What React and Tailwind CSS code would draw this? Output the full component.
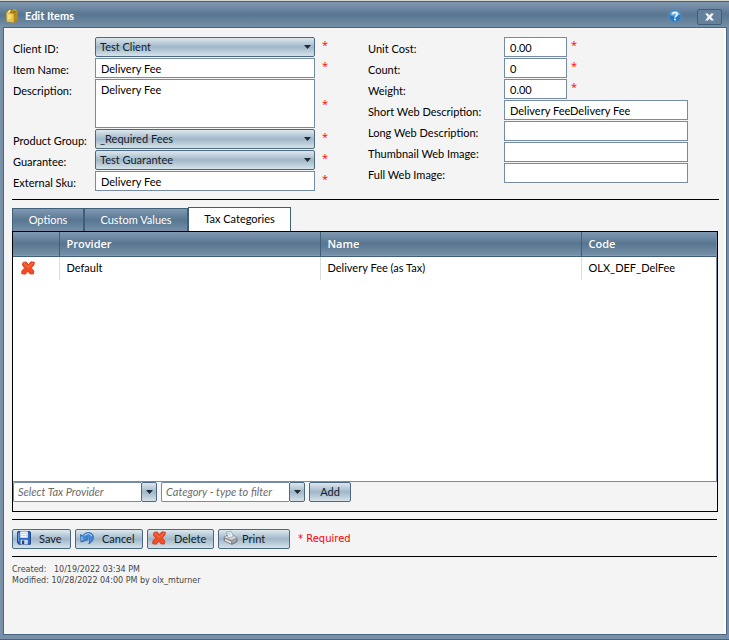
import React, { useState } from 'react';

const BAR = 'bg-linear-to-b from-[#8299b2] from-0% via-[#587691] via-50% to-[#7590a7] to-100%';
const BUTTON = 'bg-linear-to-b from-[#dde8ed] from-0% via-[#a0b7c9] via-50% to-[#d6e2e8] to-100% border border-[#4b6983] rounded-xs';
const FIELD = 'bg-white border border-[#768ca5] outline-none text-[11px] text-black';

// --- Icons ---
const BoxIcon = () => (
    <svg width="14" height="16" viewBox="0 0 14 16" aria-hidden="true">
        <path d="M1.2 4.5 4 1.6h6.5L12.8 4v8.6L9.8 14.6 1.6 14z" fill="#a67c12" />
        <path d="M1.3 5 8.8 5.4v9L1.8 13.8z" fill="#e6c245" />
        <path d="M8.8 5.4 12.6 4v8.4l-3 2z" fill="#b58b1c" />
        <path d="M1.6 4.7 4.2 2h2L4.8 5z" fill="#f4e08a" />
        <path d="M5 4.8 6.8 2H10L9 5z" fill="#8c6a14" />
        <path d="M2.4 6.2 6.5 6.5v4L2.6 12z" fill="#f5dc78" />
        <path d="M7 4.4C8.2.8 11 .6 11.3 4" fill="none" stroke="#caa437" strokeWidth="1.2" />
    </svg>
);

const HelpIcon = () => (
    <svg width="14" height="14" viewBox="0 0 14 14" aria-hidden="true">
        <circle cx="7" cy="7" r="6.3" fill="#2878c4" stroke="#5f8fb8" strokeWidth="1" />
        <path d="M1.7 6a5.4 5.4 0 0 1 10.6 0C9 5.5 5 8 1.7 6z" fill="#69ade5" />
        <path d="M4.8 5.2C5 3 9.2 3 9.2 5.3 9.2 6.8 7 6.8 7 8.6" fill="none" stroke="#fff" strokeWidth="1.6" />
        <circle cx="7" cy="10.6" r="1" fill="#fff" />
    </svg>
);

const CloseIcon = () => (
    <svg width="9" height="8" viewBox="0 0 9 8" aria-hidden="true">
        <path d="M0 .5h3l1.5 2 1.5-2h3L6.2 4 9 7.5H6l-1.5-2-1.5 2H0L2.8 4z" fill="#f3f5f7" />
    </svg>
);

const ArrowIcon = () => (
    <svg width="7" height="4" viewBox="0 0 7 4" aria-hidden="true">
        <path d="M0 0h7L3.5 4z" fill="#1c2a35" />
    </svg>
);

const CrossIcon = () => (
    <svg width="14" height="14" viewBox="0 0 14 14" aria-hidden="true">
        <path
            d="M2 1.4 5.2.9 7.3 3.6 9.8.8 13.5 1.2 12.8 4.3 10.2 6.7 13 10.2 12.3 13 9 12.9 6.8 10.2 4.4 13.2.7 12.8.9 9.8 3.6 7 1.4 4z"
            fill="#f14c26" stroke="#d23a1a" strokeWidth=".8" strokeLinejoin="round"
        />
        <path d="M3.2 2.4 7 6.4 11.8 2.2" fill="none" stroke="#ff7d52" strokeWidth="1" strokeLinecap="round" />
    </svg>
);

const SaveIcon = () => (
    <svg width="14" height="14" viewBox="0 0 14 14" aria-hidden="true">
        <path d="M.6 1.2.9.6h12l.5.6v12H2L.6 12z" fill="#2f68be" stroke="#1d4384" />
        <path d="M3.2.4h7.6v6.4H3.2z" fill="#eef4f9" />
        <path d="M4 2.5h6M4 4.5h6" stroke="#c3d3e2" strokeWidth=".8" />
        <path d="M3.6 8.8h7.2v4.6H3.6z" fill="#c9d6e3" />
        <path d="M5 9.6h2.2v3.4H5z" fill="#1d4384" />
        <path d="M1.6 2v8" stroke="#6f9fe0" />
    </svg>
);

const UndoIcon = () => (
    <svg width="14" height="14" viewBox="0 0 14 14" aria-hidden="true">
        <path
            d="M.6 3.6 2.6 5C5.4.2 12.8.4 13.4 5.6c.4 3.4-1.6 5.8-4.6 7.2C10.2 9.8 10 5.6 6.4 6.4L8.2 8.8 1 11z"
            fill="#4389d6" stroke="#225da8" strokeWidth=".8" strokeLinejoin="round"
        />
        <path d="M4.4 4.6C6.4 2 10.5 2 11.8 5M1.8 5.6l.2 3.8" fill="none" stroke="#a9d2f6" strokeWidth="1.1" />
    </svg>
);

const PrintIcon = () => (
    <svg width="15" height="14" viewBox="0 0 15 14" aria-hidden="true">
        <path d="M1 6.2 4 4.6 10 4l4 2.6v4.2L9 13.4 1.2 9.8z" fill="#8b8d90" stroke="#6a6d71" strokeWidth=".7" />
        <path d="M1.2 6.2 4 4.8 10 4.2l3.8 2.4L8.8 9z" fill="#d3d5d7" />
        <path d="M3 1.2 8.2.4 10.4 5.4 5.6 6.8z" fill="#f8fbfd" stroke="#8396a6" strokeWidth=".7" />
        <path d="m4.5 2.6 3-.5M5.2 4.2l3-.6" stroke="#95c2e5" strokeWidth=".8" />
        <path d="m2 8 6 2.8v1.6L2 9.6z" fill="#f1f2f3" />
        <path d="m9.4 10 3.8-2v2l-3.8 2z" fill="#a9abae" />
    </svg>
);

// --- Form pieces ---
const SelectField = ({ id, options }) => (
    <div className="relative flex h-5 w-[220px]">
        <select id={id} className={`${BUTTON} h-5 w-full appearance-none pr-5 pl-1 text-[11px] leading-4 text-[#10202c] outline-none`}>
            {options.map((option) => <option key={option}>{option}</option>)}
        </select>
        <span className="pointer-events-none absolute top-2 right-1"><ArrowIcon /></span>
    </div>
);

const FormRow = ({ id, label, type = 'text', value, options, required, labelWidth, size, markGap = 'pl-[7px]' }) => (
    <div className="flex">
        <label htmlFor={id} className={`${labelWidth} shrink-0 pt-1 text-[11px] leading-4 text-black`}>{label}</label>
        {type === 'select' && <SelectField id={id} options={options} />}
        {type === 'textarea' && <textarea id={id} defaultValue={value} className={`${FIELD} h-[49px] w-[220px] resize-none px-[5px] pt-[2px] leading-4`} />}
        {type === 'text' && <input id={id} type="text" defaultValue={value} className={`${FIELD} ${size} px-[5px] pt-px`} />}
        {required && (
            <span className={`${markGap} flex font-['Open_Sans',sans-serif] text-[11px] leading-4 text-[#ff0000] ${type === 'textarea' ? 'items-center' : ''}`}>*</span>
        )}
    </div>
);

const ComboBox = ({ id, placeholder }) => (
    <div className="flex h-5 w-36">
        <input id={id} aria-label={placeholder} placeholder={placeholder} className={`${FIELD} w-full min-w-0 rounded-l-xs border-r-0 px-1 italic placeholder:text-[#6b6b6b]`} />
        <button type="button" aria-label={`Open ${placeholder}`} className={`${BUTTON} flex w-4 shrink-0 items-center justify-center`}><ArrowIcon /></button>
    </div>
);

const ActionButton = ({ icon: Icon, label, width, gap = 'gap-2' }) => (
    <button type="button" className={`${BUTTON} ${width} ${gap} flex h-5 items-center pl-1 text-[11px] leading-4 text-[#10202c]`}>
        <span className="pb-[2px]"><Icon /></span>
        <span>{label}</span>
    </button>
);

const leftFields = [
    { id: 'client', label: 'Client ID:', type: 'select', options: ['Test Client'], required: true },
    { id: 'name', label: 'Item Name:', value: 'Delivery Fee', required: true },
    { id: 'description', label: 'Description:', type: 'textarea', value: 'Delivery Fee', required: true },
    { id: 'group', label: 'Product Group:', type: 'select', options: ['_Required Fees'], required: true },
    { id: 'guarantee', label: 'Guarantee:', type: 'select', options: ['Test Guarantee'], required: true },
    { id: 'sku', label: 'External Sku:', value: 'Delivery Fee', required: true },
];

const rightFields = [
    { id: 'cost', label: 'Unit Cost:', value: '0.00', size: 'h-5 w-[63px]', required: true },
    { id: 'count', label: 'Count:', value: '0', size: 'h-5 w-[63px]', required: true },
    { id: 'weight', label: 'Weight:', value: '0.00', size: 'h-5 w-[63px]', required: true },
    { id: 'short', label: 'Short Web Description:', value: 'Delivery FeeDelivery Fee', size: 'h-5 w-[184px]' },
    { id: 'long', label: 'Long Web Description:', value: '', size: 'h-5 w-[184px]' },
    { id: 'thumb', label: 'Thumbnail Web Image:', value: '', size: 'h-5 w-[184px]' },
    { id: 'full', label: 'Full Web Image:', value: '', size: 'h-5 w-[184px]' },
];

const TABS = [
    { label: 'Options', width: 'w-[72px]' },
    { label: 'Custom Values', width: 'w-[104px]' },
    { label: 'Tax Categories', width: 'w-[103px]' },
];

const categories = [{ provider: 'Default', name: 'Delivery Fee (as Tax)', code: 'OLX_DEF_DelFee' }];

const TaxTable = () => (
    <div className="min-h-[250px] border-r border-b border-[#768ca5] bg-white">
        <table className="w-full table-fixed border-collapse text-[11px] leading-4">
            <colgroup>
                <col className="w-[46px]" />
                <col />
                <col />
                <col className="w-[135px]" />
            </colgroup>
            <thead>
                <tr className={`${BAR} h-6 border-b border-[#3f5e78] text-left font-['Open_Sans',sans-serif] text-white`}>
                    <th aria-label="Remove" />
                    {['Provider', 'Name', 'Code'].map((title) => (
                        <th key={title} className="border-l border-[#3f5e78] px-[7px] font-semibold">{title}</th>
                    ))}
                </tr>
            </thead>
            <tbody>
                {categories.map((row) => (
                    <tr key={row.code} className="h-6">
                        <td className="pl-2"><button type="button" aria-label="Remove" className="block"><CrossIcon /></button></td>
                        <td className="border-l border-[#d5dde5] px-[7px]">{row.provider}</td>
                        <td className="border-l border-[#d5dde5] px-[7px]">{row.name}</td>
                        <td className="border-l border-[#d5dde5] px-[7px]">{row.code}</td>
                    </tr>
                ))}
            </tbody>
        </table>
    </div>
);

export default function App() {
    const [activeTab, setActiveTab] = useState('Tax Categories');

    return (
        <div className="flex min-h-screen flex-col border-t border-b border-t-[#d6d6d0] border-b-[#4a6580] bg-[#7890a8] font-['Lato','Noto_Sans',sans-serif]">
            <header className={`${BAR} flex h-[26px] shrink-0 items-center border-t border-[#3f5e78] pt-1 pr-[7px] pl-[5px]`}>
                <div className="pb-[2px]"><BoxIcon /></div>
                <h1 className="ml-[6px] flex-1 pb-[2px] text-[11px] leading-4 font-bold text-white">Edit Items</h1>
                <button type="button" aria-label="Help" className="mr-[15px] pb-[2px]"><HelpIcon /></button>
                <button type="button" aria-label="Close" className="flex h-4 w-[25px] items-center justify-center rounded-xs border border-[#3f5e78] bg-[#64809a]"><CloseIcon /></button>
            </header>

            <main className="mr-[2px] mb-1 ml-[3px] flex-1 border border-[#4a6580] bg-[#f4f4f4] pt-[9px] pr-[7px] pl-2 shadow-[inset_-2px_0_0_#ffffff]">
                <form className="grid grid-cols-2 border-b border-black pb-2 pl-px">
                    <div className="flex flex-col gap-px">
                        {leftFields.map((field) => <FormRow key={field.id} size="h-5 w-[220px]" labelWidth="w-[82px]" {...field} />)}
                    </div>
                    <div className="flex flex-col gap-px pl-[2px]">
                        {rightFields.map((field) => <FormRow key={field.id} labelWidth="w-[136px]" markGap="pl-1" {...field} />)}
                    </div>
                </form>

                <div role="tablist" className="mt-[7px] flex items-end">
                    {TABS.map((tab) => (
                        <button
                            key={tab.label} type="button" role="tab" aria-selected={activeTab === tab.label}
                            onClick={() => setActiveTab(tab.label)}
                            className={`${tab.width} border border-b-0 border-[#3f5e78] pb-px text-[11px] leading-4 ${activeTab === tab.label ? 'h-6 bg-white text-black' : `${BAR} h-[23px] text-white`}`}
                        >
                            {tab.label}
                        </button>
                    ))}
                </div>

                <section className="mr-px border border-black pb-[9px]">
                    <TaxTable />
                    <div className="flex gap-1">
                        <ComboBox id="provider" placeholder="Select Tax Provider" />
                        <ComboBox id="category" placeholder="Category - type to filter" />
                        <button type="button" className={`${BUTTON} h-5 w-[42px] text-[11px] leading-4 text-[#10202c]`}>Add</button>
                    </div>
                </section>

                <div className="mt-[7px] mr-[2px] flex items-center gap-1 border-y border-black pt-[9px] pb-[7px]">
                    <ActionButton icon={SaveIcon} label="Save" width="w-[59px]" />
                    <ActionButton icon={UndoIcon} label="Cancel" width="w-[68px]" />
                    <ActionButton icon={CrossIcon} label="Delete" width="w-[67px]" />
                    <ActionButton icon={PrintIcon} label="Print" width="w-[72px]" gap="gap-1" />
                    <span className="ml-1 font-['DejaVu_Sans',sans-serif] text-[10px] leading-4 text-[#ff0000]">* Required</span>
                </div>

                <footer className="mt-[7px] font-['DejaVu_Sans',sans-serif] text-[8px] leading-[11px] text-[#444]">
                    <p>Created: &nbsp;&nbsp;10/19/2022 03:34 PM</p>
                    <p>Modified: 10/28/2022 04:00 PM by olx_mturner</p>
                </footer>
            </main>
        </div>
    );
}
